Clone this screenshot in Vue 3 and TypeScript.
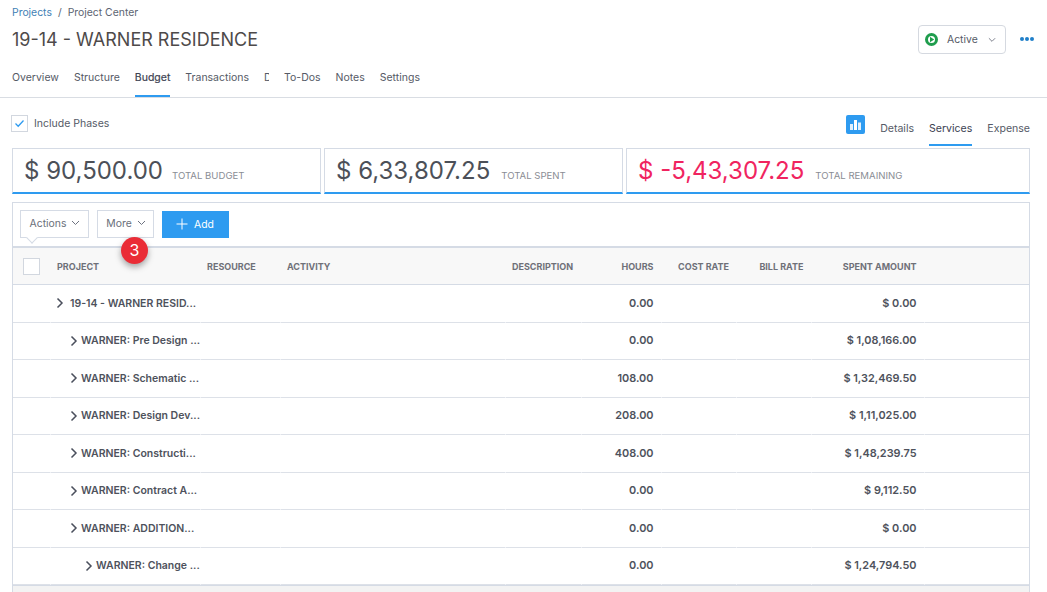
<script setup lang="ts">
interface Row {
  name: string
  level: number
  hours: string
  spent: string
}

const tabs = ['Overview', 'Structure', 'Budget', 'Transactions', 'D', 'To-Dos', 'Notes', 'Settings']

const cards = [
  { amount: '$ 90,500.00', label: 'TOTAL BUDGET', negative: false },
  { amount: '$ 6,33,807.25', label: 'TOTAL SPENT', negative: false },
  { amount: '$ -5,43,307.25', label: 'TOTAL REMAINING', negative: true },
]

const rows: Row[] = [
  { name: '19-14 - WARNER RESID...', level: 0, hours: '0.00', spent: '$ 0.00' },
  { name: 'WARNER: Pre Design ...', level: 1, hours: '0.00', spent: '$ 1,08,166.00' },
  { name: 'WARNER: Schematic ...', level: 1, hours: '108.00', spent: '$ 1,32,469.50' },
  { name: 'WARNER: Design Dev...', level: 1, hours: '208.00', spent: '$ 1,11,025.00' },
  { name: 'WARNER: Constructi...', level: 1, hours: '408.00', spent: '$ 1,48,239.75' },
  { name: 'WARNER: Contract A...', level: 1, hours: '0.00', spent: '$ 9,112.50' },
  { name: 'WARNER: ADDITION...', level: 1, hours: '0.00', spent: '$ 0.00' },
  { name: 'WARNER: Change ...', level: 2, hours: '0.00', spent: '$ 1,24,794.50' },
]
</script>

<template>
  <div class="page">
    <header class="top">
      <div class="head-row">
        <div>
          <div class="crumbs"><a>Projects</a><span class="sep">/</span><span>Project Center</span></div>
          <h1>19-14 - WARNER RESIDENCE</h1>
        </div>
        <div class="head-actions">
          <button class="status">
            <svg class="play" width="13" height="13" viewBox="0 0 13 13">
              <circle cx="6.5" cy="6.5" r="5" fill="#fff" stroke="#1f9d4d" stroke-width="3" />
              <path d="M5 3.8 9.2 6.5 5 9.2z" fill="#1f9d4d" />
            </svg>
            <span class="status-text">Active</span>
            <svg class="chev" width="8" height="6" viewBox="0 0 9 6"><path d="M1 1l3.5 3.5L8 1" fill="none" stroke="#6d7280" /></svg>
          </button>
          <div class="dots"><i></i><i></i><i></i></div>
        </div>
      </div>
      <nav class="tabs">
        <a v-for="t in tabs" :key="t" :class="{ on: t === 'Budget', cut: t === 'D' }">{{ t }}</a>
      </nav>
    </header>

    <div class="options">
      <label class="include">
        <span class="check">
          <svg width="11" height="9" viewBox="0 0 11 9"><path d="M1.5 4.5 4.2 7.2 9.5 1.5" fill="none" stroke="#2e9bf0" stroke-width="1.3" /></svg>
        </span>
        Include Phases
      </label>
      <div class="sub-tabs">
        <span class="chart">
          <svg width="19" height="19" viewBox="0 0 19 19">
            <rect width="19" height="19" rx="2" fill="#2e9bf0" />
            <rect x="4" y="9" width="3" height="6" fill="#fff" opacity=".85" />
            <rect x="8" y="5" width="3" height="10" fill="#fff" />
            <rect x="12" y="7.5" width="3" height="7.5" fill="#fff" opacity=".85" />
          </svg>
        </span>
        <a>Details</a>
        <a class="on">Services</a>
        <a>Expense</a>
      </div>
    </div>

    <section class="cards">
      <div v-for="c in cards" :key="c.label" class="card">
        <span class="amount" :class="{ negative: c.negative }">{{ c.amount }}</span>
        <span class="card-label">{{ c.label }}</span>
      </div>
    </section>

    <section class="panel">
      <div class="toolbar">
        <button class="tool actions">Actions
          <svg width="9" height="6" viewBox="0 0 9 6"><path d="M1 1l3.5 3.5L8 1" fill="none" stroke="#6d7280" /></svg>
        </button>
        <button class="tool more">More
          <svg width="9" height="6" viewBox="0 0 9 6"><path d="M1 1l3.5 3.5L8 1" fill="none" stroke="#6d7280" /></svg>
        </button>
        <button class="add">
          <svg width="12" height="12" viewBox="0 0 12 12"><path d="M6 .5v11M.5 6h11" stroke="#fff" stroke-width="1" /></svg>
          Add
        </button>
        <span class="badge">3</span>
      </div>

      <div class="grid head">
        <div class="cell"><span class="box"></span></div>
        <div class="cell">PROJECT</div>
        <div class="cell">RESOURCE</div>
        <div class="cell">ACTIVITY</div>
        <div class="cell">DESCRIPTION</div>
        <div class="cell right">HOURS</div>
        <div class="cell right cost">COST RATE</div>
        <div class="cell right">BILL RATE</div>
        <div class="cell right">SPENT AMOUNT</div>
        <div class="cell"></div>
      </div>

      <div v-for="r in rows" :key="r.name" class="grid row">
        <div class="cell"></div>
        <div class="cell name" :class="'lvl' + r.level">
          <svg width="8" height="12" viewBox="0 0 8 12"><path d="M1.5 1.5 6 6l-4.5 4.5" fill="none" stroke="#4a4f5c" stroke-width="1.5" /></svg>
          <span>{{ r.name }}</span>
        </div>
        <div class="cell"></div>
        <div class="cell"></div>
        <div class="cell"></div>
        <div class="cell right num">{{ r.hours }}</div>
        <div class="cell"></div>
        <div class="cell"></div>
        <div class="cell right num">{{ r.spent }}</div>
        <div class="cell"></div>
      </div>
      <div class="foot"></div>
    </section>
  </div>
</template>

<style>
html, body { margin: 0; overflow: hidden; background: #fff; }
</style>

<style scoped>
.page {
  width: 1047px;
  height: 592px;
  overflow: hidden;
  font-family: Inter, "Liberation Sans", sans-serif;
  color: #555a66;
  font-size: 10.5px;
}
button { font-family: inherit; cursor: pointer; }

.top { border-bottom: 1px solid #d9dde3; box-sizing: border-box; height: 98px; }
.head-row { display: flex; justify-content: space-between; padding: 6px 13px 0 12px; height: 64px; box-sizing: border-box; }
.crumbs { font-size: 10.4px; line-height: 13px; color: #5c6472; }
.crumbs a { color: #3f7fb5; }
.sep { margin: 0 6px; }
h1 { margin: 10px 0 0; font-size: 18px; line-height: 22px; font-weight: 400; color: #4e4a4a; }
.head-actions { display: flex; align-items: center; gap: 14px; margin-top: 19px; height: 29px; }
.status {
  display: flex;
  align-items: center;
  width: 88px;
  height: 29px;
  padding: 0 0 0 6px;
  background: #fff;
  border: 1px solid #d5d9e0;
  border-radius: 4px;
  font-size: 10.4px;
  color: #555a66;
}
.play { margin-bottom: 1px; }
.status-text { margin-left: 9px; }
.chev { margin-left: 10px; }
.dots { display: flex; gap: 1px; width: 14px; margin-top: -1px; }
.dots i { width: 4px; height: 4px; border-radius: 50%; background: #1f7fc9; }

.tabs { display: flex; gap: 15px; padding-left: 12px; height: 33px; font-size: 10.5px; }
.tabs a { line-height: 27px; height: 33px; box-sizing: border-box; }
.tabs a.on { color: #3d4252; border-bottom: 2px solid #2e9bf0; -webkit-text-stroke: .2px #3d4252; }
.tabs a.cut { width: 5px; overflow: hidden; white-space: nowrap; }

.options { display: flex; justify-content: space-between; height: 50px; padding: 0 17px 0 11px; }
.include { display: flex; align-items: center; gap: 6px; height: 17px; margin-top: 17px; }
.check { display: flex; align-items: center; justify-content: center; width: 15px; height: 15px; border: 1px solid #d2d7df; }
.sub-tabs { display: flex; gap: 15px; height: 50px; align-items: flex-start; font-size: 10.55px; }
.sub-tabs .chart { margin-top: 17px; height: 19px; }
.sub-tabs a { line-height: 18px; margin-top: 22px; height: 26px; box-sizing: border-box; }
.sub-tabs a.on { color: #3d4252; border-bottom: 2px solid #2e9bf0; }

.cards { display: flex; gap: 3px; padding: 0 17px 0 12px; height: 46px; }
.card {
  box-sizing: border-box;
  flex: 299px 0 0;
  display: flex;
  align-items: baseline;
  gap: 11px;
  height: 46px;
  padding: 7px 0 0 11px;
  border: 1px solid #d5dbe5;
  border-bottom: 2px solid #2e9bf0;
}
.card:first-child { flex-basis: 309px; gap: 9px; }
.card:last-child { flex-basis: 404px; }
.amount { font-size: 24px; line-height: 30px; color: #4c5058; }
.amount.negative { color: #f0245f; }
.card-label { font-size: 9.6px; color: #8a8d94; }

.panel {
  box-sizing: border-box;
  position: relative;
  width: 1018px;
  margin: 8px 0 0 12px;
  height: 400px;
  border: 1px solid #d5dbe5;
  border-bottom: 0;
}
.toolbar { display: flex; gap: 8px; height: 43px; padding: 7px 0 0 7px; box-sizing: border-box; }
.tool {
  position: relative;
  display: flex;
  align-items: center;
  justify-content: center;
  gap: 5px;
  width: 69px;
  height: 28px;
  padding: 0 0 2px 1px;
  background: #fff;
  border: 1px solid #d5dbe5;
  font-size: 10.4px;
  color: #6a6f7a;
}
.tool.more { width: 57px; }
.tool.actions::after {
  content: "";
  position: absolute;
  left: 7px;
  bottom: -5px;
  width: 7px;
  height: 7px;
  background: #fff;
  border-right: 1px solid #d5dbe5;
  border-bottom: 1px solid #d5dbe5;
  transform: rotate(45deg);
}
.add {
  display: flex;
  align-items: center;
  gap: 6px;
  width: 67px;
  height: 27px;
  margin-top: 1px;
  padding: 0 0 1px 14px;
  border: 0;
  background: #2e9bf0;
  color: #fff;
  font-size: 10.4px;
}
.badge {
  position: absolute;
  left: 108px;
  top: 34px;
  z-index: 2;
  width: 27px;
  height: 27px;
  border-radius: 50%;
  background: #ea2c36;
  color: #fff;
  font-size: 16px;
  line-height: 27px;
  text-align: center;
  box-shadow: 0 3px 6px rgba(0, 0, 0, .35);
}

.grid {
  display: grid;
  grid-template-columns: 37px 150px 80px 225px 76px 80px 75px 75px 113px 1fr;
  align-items: stretch;
}
.cell { display: flex; align-items: center; padding: 0 7px; box-sizing: border-box; min-width: 0; white-space: nowrap; }
.cell.right { justify-content: flex-end; padding-right: 7.5px; }
.cell.right.cost { padding-right: 7px; }
.head {
  height: 39px;
  background: #f8f8f8;
  border-top: 2px solid #d5dbe5;
  border-bottom: 1px solid #d5dbe5;
  box-sizing: border-box;
  font-size: 9px;
  font-weight: 700;
  color: #6f7078;
}
.box { width: 15px; height: 15px; border: 1px solid #d2d7df; background: #fff; margin-left: 3px; flex: none; }
.row { height: 37.5px; font-size: 10.9px; font-weight: 600; color: #4e525c; }
.row .cell { border-bottom: 1px solid #dde1e8; border-left: 1px solid #fff; }
.row .cell:first-child { border-left: 0; }
.row .num { padding-bottom: 1px; }
.name { font-size: 10.5px; }
.name svg { flex: none; }
.name.lvl0 { padding-left: 5px; gap: 6px; }
.name.lvl1 { padding-left: 19px; gap: 3px; }
.name.lvl2 { padding-left: 34px; gap: 3px; }
.foot { height: 20px; background: #f3f3f3; border-top: 1px solid #d5dbe5; }
</style>
